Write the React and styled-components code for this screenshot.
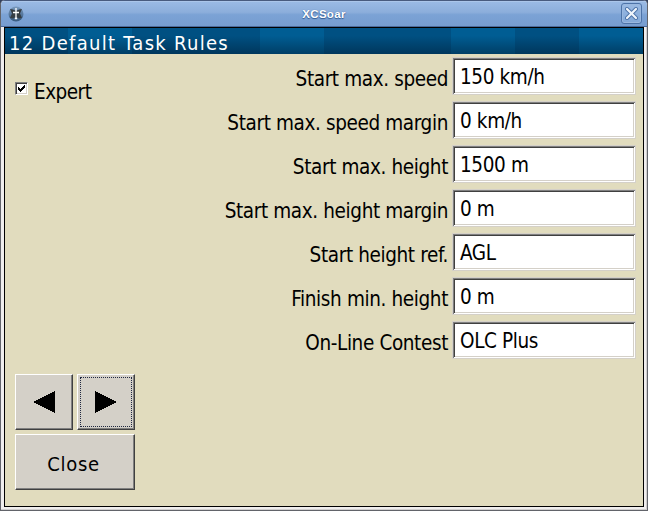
import React from 'react';
import styled, { createGlobalStyle } from 'styled-components';

const GlobalStyle = createGlobalStyle`
  * { box-sizing: border-box; }
  body { margin: 0; background: #33415f; overflow: hidden; }
  button { font: inherit; color: inherit; }
`;

const Window = styled.main`
  width: 648px;
  height: 511px;
  display: flex;
  flex-direction: column;
  background: #f0eeee;
  border: 1px solid #62646a;
  border-top: 0;
  border-radius: 5px 5px 0 0;
  overflow: hidden;
  font-family: "DejaVu Sans Condensed", "DejaVu Sans", sans-serif;
  font-stretch: condensed;
  color: #000;
`;

const TitleBar = styled.header`
  flex: 0 0 27px;
  display: grid;
  grid-template-columns: 28px 1fr 28px;
  align-items: center;
  background: linear-gradient(#9bbbe5, #8caedb 45%, #7ba2d5 55%, #779dd0);
  border-top: 1px solid #485b7e;
  border-bottom: 1px solid #4a6a9b;
  box-shadow: inset 0 1px #abc6ea;
`;

const AppIcon = styled.svg`
  width: 16px;
  height: 16px;
  margin-left: 7px;
`;

const Caption = styled.h1`
  margin: 0;
  text-align: center;
  color: #fff;
  font: bold 11.5px/14px "Liberation Sans", sans-serif;
  letter-spacing: 0.3px;
  text-shadow: 0 1px 1px #345b91, 0 0 1px #4c71a6;
  padding: 1px 0 0 0;
`;

const WindowClose = styled.button`
  display: grid;
  place-items: center;
  width: 21px;
  height: 21px;
  margin-left: 2px;
  padding: 0;
  border: 1px solid #4d73a8;
  border-radius: 3px;
  background: linear-gradient(#9bbae3, #82a8d8);
  box-shadow: inset 0 0 0 1px #9ab8df;
`;

const Frame = styled.div`
  flex: 1;
  padding: 0 2px 2px 3px;
  border: solid #cfcdcd;
  border-width: 0 1px 1px 0;
  display: flex;
`;

const Client = styled.section`
  flex: 1;
  border: 1px solid #000;
  background: #e1dcbe;
  display: flex;
  flex-direction: column;
`;

const PageTitle = styled.h2`
  margin: 0;
  flex: none;
  height: 26px;
  padding-left: 4px;
  color: #fff;
  font-size: 20px;
  font-weight: 400;
  line-height: 30px;
  letter-spacing: 1.3px;
  white-space: nowrap;
  background:
    linear-gradient(transparent 30%, rgba(0, 20, 40, 0.42)),
    linear-gradient(90deg, #005082 63px, #005d93 63px 127px, #005082 127px 255px,
      #005d93 255px 319px, #005082 319px 446px, #005d93 446px 510px,
      #005082 510px 574px, #005d93 574px);
`;

const Content = styled.div`
  flex: 1;
  display: grid;
  grid-template-columns: 130px 1fr;
  padding: 3px 7px 16px 10px;
`;

const Sidebar = styled.aside`
  display: flex;
  flex-direction: column;
  justify-content: space-between;
`;

const CheckLabel = styled.label`
  display: flex;
  align-items: flex-start;
  gap: 6px;
  padding-top: 22px;
  font-size: 20.5px;
  line-height: 26px;
  letter-spacing: -0.5px;
`;

const CheckBox = styled.span`
  width: 13px;
  height: 13px;
  margin-top: 3px;
  border: 1px solid;
  border-color: #808080 #fff #fff #808080;
  box-shadow: inset 1px 1px #404040, inset -1px -1px #d4d0c8;
  background: #fff;
  display: grid;
  place-items: center;
`;

const Actions = styled.nav`
  display: grid;
  grid-template-columns: 58px 58px;
  grid-auto-rows: 56px;
  gap: 4px;
`;

const Button = styled.button`
  display: grid;
  place-items: center;
  padding: ${p => (p.$focused ? '2px' : '0')};
  border: 1px solid;
  border-color: #fff #404040 #404040 #fff;
  box-shadow: inset -1px -1px #808080;
  background: #d4d0c8;
`;

const TextButton = styled(Button)`
  grid-column: span 2;
  padding: 4px 3px 0 0;
  font-size: 20px;
  letter-spacing: 0.7px;
`;

const FocusRing = styled.span`
  width: 100%;
  height: 100%;
  border: 1px dotted #202840;
  display: grid;
  place-items: center;
`;

const Arrow = styled.svg`
  width: 22px;
  height: 22px;
  display: block;
`;

const Form = styled.div`
  display: grid;
  grid-auto-rows: 38px;
  row-gap: 6px;
`;

const Row = styled.label`
  display: grid;
  grid-template-columns: 1fr 184px;
  column-gap: 4px;
  font-size: 20.5px;
  line-height: 24px;
  letter-spacing: -0.38px;
  white-space: nowrap;
`;

const RowLabel = styled.span`
  text-align: right;
  padding-top: 10px;
`;

const Field = styled.output`
  background: #fff;
  border: 1px solid #d4d0c8;
  box-shadow: inset 1px 1px #808080, inset -1px -1px #fff,
    inset 2px 2px #404040, inset -2px -2px #d4d0c8;
  padding: 7px 0 0 7px;
`;

const settings = [
  ['Start max. speed', '150 km/h'],
  ['Start max. speed margin', '0 km/h'],
  ['Start max. height', '1500 m'],
  ['Start max. height margin', '0 m'],
  ['Start height ref.', 'AGL'],
  ['Finish min. height', '0 m'],
  ['On-Line Contest', 'OLC Plus'],
];

export default function App() {
  return (
    <>
      <GlobalStyle />
      <Window>
        <TitleBar>
          <AppIcon viewBox="0 0 16 16">
            <defs>
              <linearGradient id="globe" x2="0" y2="1">
                <stop stopColor="#7999bd" />
                <stop offset="1" stopColor="#36597f" />
              </linearGradient>
            </defs>
            <circle cx="8" cy="8" r="7.5" fill="url(#globe)" />
            <path d="M2 3l3 .5 3 1.5 3-1.5 3-.5-2 4.5 2 4.5-3 .5-3-1.5-3 1.5-3-.5 2-4.5z" fill="#353d43" />
            <path d="M8 2v11M5 6.5h6M6.8 12.5h2.4" stroke="#fff" strokeWidth="1.3" />
          </AppIcon>
          <Caption>XCSoar</Caption>
          <WindowClose aria-label="Close window">
            <svg width="13" height="13" viewBox="0 0 13 13">
              <path d="M2 2l9 9M11 2l-9 9" stroke="#4d73a8" strokeWidth="4" strokeLinecap="round" />
              <path d="M2 2l9 9M11 2l-9 9" stroke="#f0f5fc" strokeWidth="2.2" strokeLinecap="round" />
            </svg>
          </WindowClose>
        </TitleBar>
        <Frame>
          <Client>
            <PageTitle>12 Default Task Rules</PageTitle>
            <Content>
              <Sidebar>
                <CheckLabel>
                  <CheckBox>
                    <svg width="7" height="7" viewBox="0 0 7 7" shapeRendering="crispEdges">
                      <path d="M0 2h1v1h1v1h1v-1h1v-1h1v-1h1v-1h1v3h-1v1h-1v1h-1v1h-1v1h-1v-1h-1v-1h-1z" />
                    </svg>
                  </CheckBox>
                  Expert
                </CheckLabel>
                <Actions>
                  <Button aria-label="Previous">
                    <Arrow viewBox="0 0 22 22" shapeRendering="crispEdges"><path d="M22 0v22L0 11z" /></Arrow>
                  </Button>
                  <Button aria-label="Next" $focused>
                    <FocusRing>
                      <Arrow viewBox="0 0 22 22" shapeRendering="crispEdges"><path d="M0 0v22l22-11z" /></Arrow>
                    </FocusRing>
                  </Button>
                  <TextButton>Close</TextButton>
                </Actions>
              </Sidebar>
              <Form>
                {settings.map(([label, value]) => (
                  <Row key={label}>
                    <RowLabel>{label}</RowLabel>
                    <Field>{value}</Field>
                  </Row>
                ))}
              </Form>
            </Content>
          </Client>
        </Frame>
      </Window>
    </>
  );
}
